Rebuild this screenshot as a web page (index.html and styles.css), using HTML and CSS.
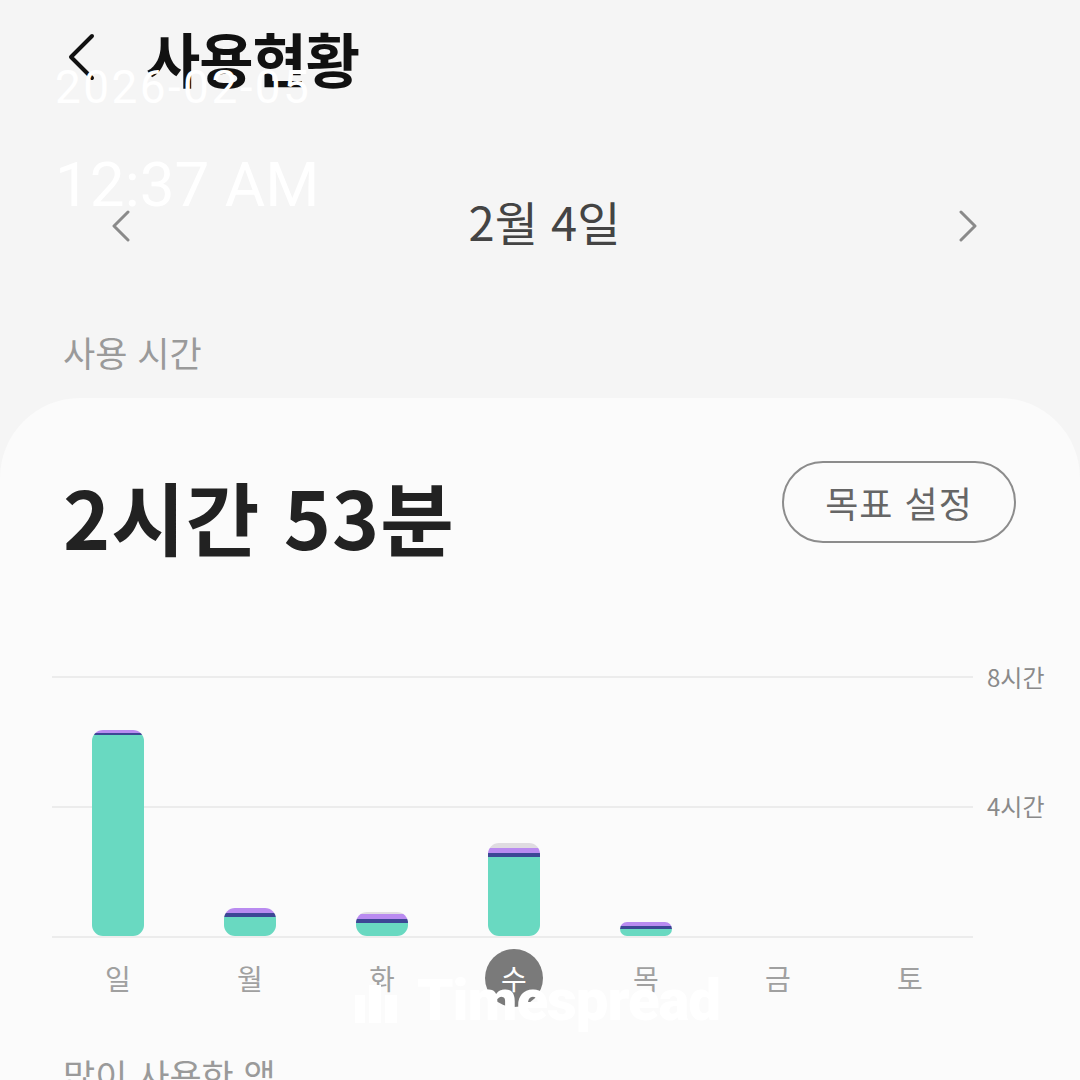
FILE: index.html
```html
<!DOCTYPE html>
<html lang="ko">
  <head>
    <meta charset="UTF-8" />
    <meta name="viewport" content="width=device-width, initial-scale=1.0" />
    <title>사용현황</title>
    <link rel="stylesheet" href="styles.css">
  </head>
  <body>
    <div class="screen">
      <div class="header">
        <svg class="back" width="30" height="48" viewBox="0 0 30 48">
          <path d="M26 3 L5 24 L26 45" fill="none" stroke="#111" stroke-width="4" stroke-linecap="round" stroke-linejoin="round" />
        </svg>
        <h1>사용현황</h1>
      </div>

      <div class="date-nav">
        <svg width="20" height="32" viewBox="0 0 20 32">
          <path d="M17 2 L3 16 L17 30" fill="none" stroke="#8a8a8a" stroke-width="3" stroke-linecap="round" stroke-linejoin="round" />
        </svg>
        <span class="date">2월 4일</span>
        <svg width="20" height="32" viewBox="0 0 20 32">
          <path d="M3 2 L17 16 L3 30" fill="none" stroke="#8a8a8a" stroke-width="3" stroke-linecap="round" stroke-linejoin="round" />
        </svg>
      </div>

      <div class="section-label">사용 시간</div>

      <div class="card">
        <div class="summary">
          <div class="total">2시간 53분</div>
          <button class="goal-btn">목표 설정</button>
        </div>

        <div class="chart">
          <div class="plot">
            <div class="bars">
              <div class="col">
                <div class="bar">
                  <div class="seg purple" style="height: 3px"></div>
                  <div class="seg dark" style="height: 2px"></div>
                  <div class="seg teal" style="height: 201px"></div>
                </div>
              </div>
              <div class="col">
                <div class="bar">
                  <div class="seg purple" style="height: 5px"></div>
                  <div class="seg dark" style="height: 4px"></div>
                  <div class="seg teal" style="height: 19px"></div>
                </div>
              </div>
              <div class="col">
                <div class="bar">
                  <div class="seg grey" style="height: 2px"></div>
                  <div class="seg purple" style="height: 5px"></div>
                  <div class="seg dark" style="height: 4px"></div>
                  <div class="seg teal" style="height: 13px"></div>
                </div>
              </div>
              <div class="col">
                <div class="bar">
                  <div class="seg grey" style="height: 5px"></div>
                  <div class="seg purple" style="height: 5px"></div>
                  <div class="seg dark" style="height: 4px"></div>
                  <div class="seg teal" style="height: 79px"></div>
                </div>
              </div>
              <div class="col">
                <div class="bar">
                  <div class="seg purple" style="height: 4px"></div>
                  <div class="seg dark" style="height: 3px"></div>
                  <div class="seg teal" style="height: 7px"></div>
                </div>
              </div>
              <div class="col"></div>
              <div class="col"></div>
            </div>
          </div>
          <div class="axis">
            <span>8시간</span>
            <span>4시간</span>
          </div>
        </div>

        <div class="days">
          <span class="day">일</span>
          <span class="day">월</span>
          <span class="day">화</span>
          <span class="day"><span class="today">수</span></span>
          <span class="day">목</span>
          <span class="day">금</span>
          <span class="day">토</span>
        </div>

        <div class="section-label apps">많이 사용한 앱</div>
      </div>

      <!-- overlays burned into the capture -->
      <div class="stamp">
        <div class="stamp-date">2026-02-05</div>
        <div class="stamp-time">12:37 AM</div>
      </div>
      <div class="brand">
        <svg width="42" height="40" viewBox="0 0 42 40">
          <rect x="0" y="12" width="10" height="28" fill="#fff" />
          <rect x="14" y="2" width="12" height="38" fill="#fff" />
          <rect x="30" y="12" width="12" height="28" fill="#fff" />
        </svg>
        <span>Timespread</span>
      </div>
    </div>
  </body>
</html>
```

FILE: styles.css
```css
body {
  margin: 0;
  background-color: #f5f5f5;
  font-family: "Noto Sans CJK KR", "Noto Sans", sans-serif;
}

.screen {
  position: relative;
  width: 1080px;
  height: 1080px;
  overflow: hidden;
}

.header {
  display: flex;
  align-items: center;
  gap: 50px;
  padding: 26px 0 0 66px;
  height: 62px;
}

.header h1 {
  margin: 0;
  font-size: 59px;
  font-weight: 700;
  color: #111;
  letter-spacing: -1px;
}

.date-nav {
  display: flex;
  align-items: center;
  justify-content: space-between;
  padding: 0 102px 0 111px;
  margin-top: 108px;
  height: 60px;
}

.date {
  font-size: 47px;
  color: #444;
  line-height: 1;
  margin-top: -12px;
}

.section-label {
  font-size: 35px;
  color: #9a9a9a;
  padding-left: 63px;
  margin-top: 70px;
}

.card {
  margin-top: 21px;
  background-color: #fbfbfb;
  border-radius: 80px 80px 0 0;
  padding: 63px 0 0 0;
  height: 700px;
}

.summary {
  display: flex;
  justify-content: space-between;
  align-items: flex-start;
  padding: 0 64px 0 63px;
}

.total {
  font-size: 80px;
  font-weight: 700;
  color: #222;
  line-height: 1;
  margin-top: 14px;
  letter-spacing: 1px;
}

.goal-btn {
  width: 234px;
  height: 82px;
  border: 2px solid #8c8c8c;
  border-radius: 41px;
  background: transparent;
  font-family: inherit;
  font-size: 36px;
  color: #666;
  letter-spacing: 1px;
}

.chart {
  display: flex;
  margin-top: 121px;
  padding-left: 52px;
}

.plot {
  width: 921px;
  height: 258px;
  border-top: 2px solid #ececec;
  border-bottom: 2px solid #ececec;
  background: linear-gradient(#ececec, #ececec) 0 128px / 100% 2px no-repeat;
}

.bars {
  display: flex;
  height: 100%;
  align-items: flex-end;
}

.col {
  width: 132px;
  flex: none;
  display: flex;
  justify-content: center;
}

.bar {
  width: 52px;
  border-radius: 11px;
  overflow: hidden;
  display: flex;
  flex-direction: column;
}

.seg.teal { background-color: #69d9c1; }
.seg.dark { background-color: #3d4795; }
.seg.purple { background-color: #b98bf0; }
.seg.grey { background-color: #dfdce1; }

.axis {
  display: flex;
  flex-direction: column;
  gap: 94px;
  margin-top: -17px;
  padding-left: 14px;
  font-size: 24px;
  color: #8a8a8a;
}

.days {
  display: flex;
  padding-left: 52px;
  margin-top: 10px;
}

.day {
  width: 132px;
  display: flex;
  justify-content: center;
  align-items: center;
  height: 60px;
  font-size: 28px;
  color: #a0a0a0;
}

.today {
  display: flex;
  justify-content: center;
  align-items: center;
  width: 58px;
  height: 58px;
  border-radius: 50%;
  background-color: #7a7a7a;
  color: #fff;
}

.section-label.apps {
  margin-top: 41px;
}

.stamp {
  position: absolute;
  left: 55px;
  top: 64px;
  color: #fff;
  font-family: Roboto, "Noto Sans", sans-serif;
  line-height: 1;
}

.stamp-date {
  font-size: 46px;
  letter-spacing: 2.4px;
}

.stamp-time {
  font-size: 62px;
  margin-top: 44px;
}

.brand {
  position: absolute;
  left: 355px;
  top: 977px;
  display: flex;
  align-items: flex-end;
  gap: 20px;
  color: #fff;
  font-family: Roboto, "Noto Sans", sans-serif;
  font-weight: 900;
  font-size: 58px;
  line-height: 46px;
  letter-spacing: -1px;
}
```
